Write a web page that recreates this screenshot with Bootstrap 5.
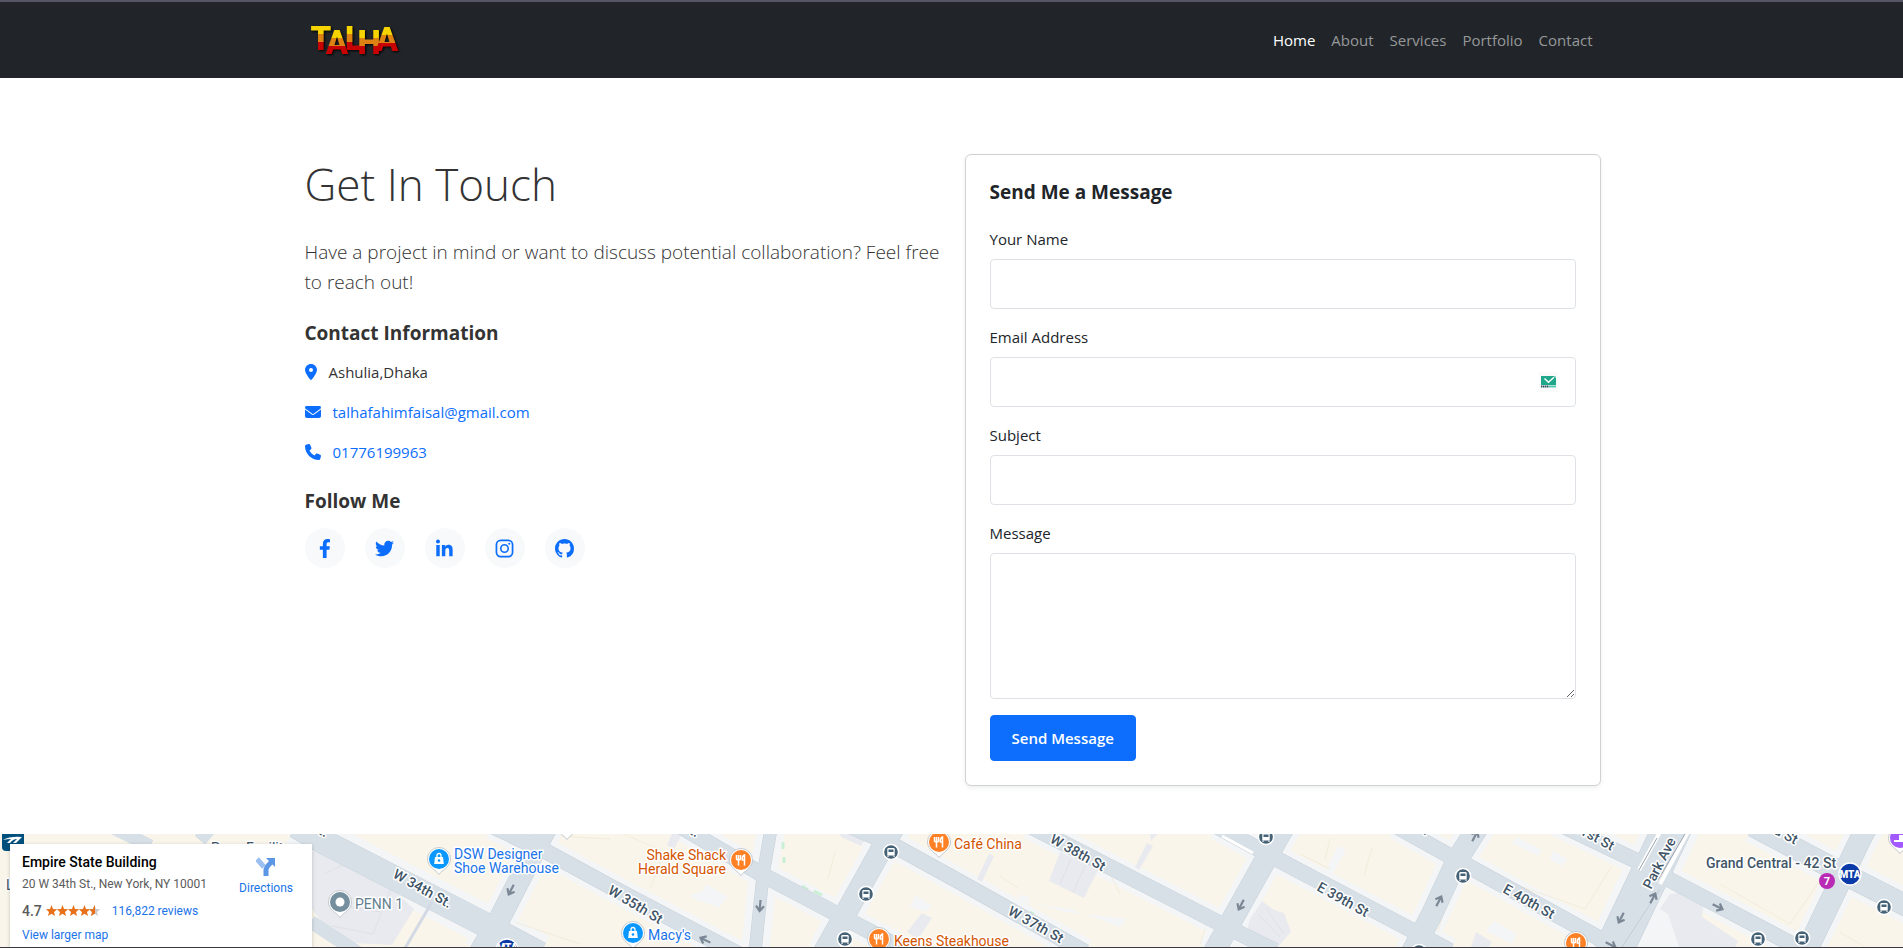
<!DOCTYPE html>
<html lang="en">
<head>
<meta charset="utf-8">
<meta name="viewport" content="width=device-width, initial-scale=1">
<title>Contact | Talha</title>
<link href="https://cdn.jsdelivr.net/npm/bootstrap@5.3.0/dist/css/bootstrap.min.css" rel="stylesheet">
<style>
  body { font-family: "Open Sans", "Noto Sans", sans-serif; font-size: 15px; line-height: 24px; }
  .container { padding-left: 13px; padding-right: 11px; }
  .site-nav { border-top: 2px solid #565666; padding: 0; min-height: 78px; }
  .site-nav .nav-link { padding: 8px; }
  .site-nav .navbar-nav .nav-link { color: #96989a; }
  .site-nav .navbar-nav .nav-link.active { color: #fff; }
  .brand-mark { filter: drop-shadow(1px 1px 1px #000); }
  .contact-area { padding-top: 76px; padding-bottom: 48px; }
  .intro { color: #333; }
  .intro h1 { font-size: 44px; font-weight: 300; line-height: 60px; margin-bottom: 23px; }
  .intro-lead { font-size: 19px; font-weight: 300; line-height: 30px; margin-bottom: 23px; }
  .block-title { font-size: 19px; font-weight: 700; line-height: 26px; margin-bottom: 14px; }
  .message-card .block-title { margin-bottom: 22px; }
  .contact-list a { text-decoration: none; }
  .contact-list svg { height: 16px; fill: #0d6efd; margin-right: 12px; flex: none; }
  .social { gap: 20px; }
  .social a { width: 40px; height: 40px; background: #f8f9fa; }
  .social svg { height: 19px; fill: #0d6efd; }
  .message-card { border-color: #d0d1d3; }
  .form-control { padding: 12px; border-radius: 4px; font-size: 15px; line-height: 24px; }
  .mail-hint { right: 18px; top: 15px; background: #fafafa; }
  .btn-send { font-size: 15px; font-weight: 600; line-height: 24px; padding: 10px 21px; border-radius: 4px; }
  .map { height: 114px; border-bottom: 1px solid #38383d; background: #f9f5ea; font-family: Roboto, sans-serif; }
  .map-art { width: 100%; height: 113px; }
  .map-info { left: 10px; top: 10px; width: 302px; height: 103px; padding: 8px 12px; font-size: 12px; line-height: 16px; color: #5b5b5b; box-shadow: 0 1px 4px rgba(0,0,0,.2); }
  .map-info a { color: #1a73e8; text-decoration: none; }
  .map-info strong { font-size: 14px; font-weight: 500; line-height: 20px; color: #000; }
  .map-info .score { font-size: 14px; font-weight: 500; }
  .map-info .place { margin: 4px 0 11px; }
  .directions { right: 19px; top: 12px; }
</style>
</head>
<body>
<nav class="navbar navbar-expand-lg bg-dark navbar-dark site-nav">
  <div class="container">
    <a class="navbar-brand p-0 m-0" href="#" aria-label="Talha">
      <svg class="d-block brand-mark" width="100" height="36" viewBox="0 0 100 36" font-family="Roboto, sans-serif" font-weight="900">
        <defs>
          <linearGradient id="flag" gradientUnits="userSpaceOnUse" x1="0" y1="-24" x2="0" y2="0">
            <stop offset=".34" stop-color="#f5d400"/><stop offset=".34" stop-color="#de8213"/>
            <stop offset=".66" stop-color="#de8213"/><stop offset=".66" stop-color="#c60202"/>
          </linearGradient>
        </defs>
        <g font-size="33" text-anchor="middle" fill="url(#flag)">
          <text transform="translate(16 28)">T</text><text transform="translate(32 32)">A</text><text transform="translate(49 28)">L</text><text transform="translate(64 32)">H</text><text transform="translate(82 29)">A</text>
        </g>
      </svg>
    </a>
    <button class="navbar-toggler" type="button" data-bs-toggle="collapse" data-bs-target="#menu" aria-label="Menu"><span class="navbar-toggler-icon"></span></button>
    <div class="collapse navbar-collapse" id="menu">
      <ul class="navbar-nav ms-auto">
        <li class="nav-item"><a class="nav-link active" href="#">Home</a></li>
        <li class="nav-item"><a class="nav-link" href="#">About</a></li>
        <li class="nav-item"><a class="nav-link" href="#">Services</a></li>
        <li class="nav-item"><a class="nav-link" href="#">Portfolio</a></li>
        <li class="nav-item"><a class="nav-link" href="#">Contact</a></li>
      </ul>
    </div>
  </div>
</nav>

<main>
  <section class="container contact-area">
    <div class="row">
      <div class="col-lg-6 intro">
        <h1>Get In Touch</h1>
        <p class="intro-lead">Have a project in mind or want to discuss potential collaboration? Feel free to reach out!</p>
        <h2 class="block-title">Contact Information</h2>
        <ul class="list-unstyled contact-list d-flex flex-column gap-3 mb-4">
          <li class="d-flex align-items-center"><svg viewBox="0 0 384 512"><path d="M215.7 499.2C267 435 384 279.4 384 192C384 86 298 0 192 0S0 86 0 192c0 87.4 117 243 168.3 307.2c12.3 15.3 35.1 15.3 47.4 0zM192 128a64 64 0 1 1 0 128 64 64 0 1 1 0-128z"/></svg>Ashulia,Dhaka</li>
          <li class="d-flex align-items-center"><svg viewBox="0 0 512 512"><path d="M48 64C21.5 64 0 85.5 0 112c0 15.1 7.1 29.3 19.2 38.4L236.8 313.6c11.4 8.5 27 8.5 38.4 0L492.8 150.4c12.1-9.1 19.2-23.3 19.2-38.4c0-26.5-21.5-48-48-48H48zM0 176V384c0 35.3 28.7 64 64 64H448c35.3 0 64-28.7 64-64V176L294.4 339.2c-22.8 17.1-54 17.1-76.8 0L0 176z"/></svg><a href="mailto:talhafahimfaisal@gmail.com">talhafahimfaisal@gmail.com</a></li>
          <li class="d-flex align-items-center"><svg viewBox="0 0 512 512"><path d="M164.9 24.6c-7.7-18.6-28-28.5-47.4-23.2l-88 24C12.1 30.2 0 46 0 64C0 311.4 200.6 512 448 512c18 0 33.8-12.1 38.6-29.5l24-88c5.3-19.4-4.6-39.7-23.2-47.4l-96-40c-16.3-6.8-35.2-2.1-46.3 11.6L304.7 368C234.3 334.7 177.3 277.7 144 207.3L193.3 167c13.7-11.2 18.4-30 11.6-46.3l-40-96z"/></svg><a href="tel:01776199963">01776199963</a></li>
        </ul>
        <h2 class="block-title">Follow Me</h2>
        <div class="social d-flex">
          <a class="rounded-circle d-flex align-items-center justify-content-center" href="#" aria-label="Facebook"><svg viewBox="0 0 320 512"><path d="M279.14 288l14.22-92.66h-88.91v-60.13c0-25.35 12.42-50.06 52.24-50.06h40.42V6.26S260.43 0 225.36 0c-73.22 0-121.08 44.38-121.08 124.72v70.62H22.89V288h81.39v224h100.17V288z"/></svg></a>
          <a class="rounded-circle d-flex align-items-center justify-content-center" href="#" aria-label="Twitter"><svg viewBox="0 0 512 512"><path d="M459.37 151.716c.325 4.548.325 9.097.325 13.645 0 138.72-105.583 298.558-298.558 298.558-59.452 0-114.68-17.219-161.137-47.106 8.447.974 16.568 1.299 25.34 1.299 49.055 0 94.213-16.568 130.274-44.832-46.132-.975-84.792-31.188-98.112-72.772 6.498.974 12.995 1.624 19.818 1.624 9.421 0 18.843-1.3 27.614-3.573-48.081-9.747-84.143-51.98-84.143-102.985v-1.299c13.969 7.797 30.214 12.67 47.431 13.319-28.264-18.843-46.781-51.005-46.781-87.391 0-19.492 5.197-37.36 14.294-52.954 51.655 63.675 129.3 105.258 216.365 109.807-1.624-7.797-2.599-15.918-2.599-24.04 0-57.828 46.782-104.934 104.934-104.934 30.213 0 57.502 12.67 76.67 33.137 23.715-4.548 46.456-13.32 66.599-25.34-7.798 24.366-24.366 44.833-46.132 57.827 21.117-2.273 41.584-8.122 60.426-16.243-14.292 20.791-32.161 39.308-52.628 54.253z"/></svg></a>
          <a class="rounded-circle d-flex align-items-center justify-content-center" href="#" aria-label="LinkedIn"><svg viewBox="0 -16 448 512"><path d="M100.28 448H7.4V148.9h92.88zM53.79 108.1C24.09 108.1 0 83.5 0 53.8a53.79 53.79 0 0 1 107.58 0c0 29.7-24.1 54.3-53.79 54.3zM447.9 448h-92.68V302.4c0-34.7-.7-79.2-48.29-79.2-48.29 0-55.69 37.7-55.69 76.7V448h-92.78V148.9h89.08v40.8h1.3c12.4-23.5 42.69-48.3 87.88-48.3 94 0 111.28 61.9 111.28 142.3V448z"/></svg></a>
          <a class="rounded-circle d-flex align-items-center justify-content-center" href="#" aria-label="Instagram"><svg viewBox="0 0 20 20"><rect x="1.500" y="1.500" width="17" height="17" rx="4.500" fill="none" stroke="#0d6efd" stroke-width="1.800"/><circle cx="10" cy="10" r="3.900" fill="none" stroke="#0d6efd" stroke-width="1.700"/><circle cx="15" cy="5" r="1.100"/></svg></a>
          <a class="rounded-circle d-flex align-items-center justify-content-center" href="#" aria-label="GitHub"><svg viewBox="0 0 16 16"><path d="M8 0C3.58 0 0 3.58 0 8c0 3.54 2.29 6.53 5.47 7.59.4.07.55-.17.55-.38 0-.19-.01-.82-.01-1.49-2.01.37-2.53-.49-2.69-.94-.09-.23-.48-.94-.82-1.13-.28-.15-.68-.52-.01-.53.63-.01 1.08.58 1.23.82.72 1.21 1.87.87 2.33.66.07-.52.28-.87.51-1.07-1.78-.2-3.64-.89-3.64-3.95 0-.87.31-1.59.82-2.15-.08-.2-.36-1.02.08-2.12 0 0 .67-.21 2.2.82.64-.18 1.32-.27 2-.27.68 0 1.36.09 2 .27 1.53-1.04 2.2-.82 2.2-.82.44 1.1.16 1.92.08 2.12.51.56.82 1.27.82 2.15 0 3.07-1.87 3.75-3.65 3.95.29.25.54.73.54 1.48 0 1.07-.01 1.93-.01 2.2 0 .21.15.46.55.38A8.012 8.012 0 0 0 16 8c0-4.42-3.58-8-8-8z"/></svg></a>
        </div>
      </div>
      <div class="col-lg-6">
        <div class="card shadow-sm message-card">
          <form class="card-body p-4">
            <h2 class="block-title">Send Me a Message</h2>
            <div class="mb-3"><label class="d-block mb-2" for="name">Your Name</label><input class="form-control" id="name" type="text"></div>
            <div class="mb-3"><label class="d-block mb-2" for="email">Email Address</label>
              <div class="position-relative"><input class="form-control" id="email" type="email">
                <svg class="mail-hint position-absolute" width="19" height="20" viewBox="0 0 19 20"><path d="M2 4h13l2 2v9H2z" fill="#1fa78c"/><path d="M15 4h2v2z" fill="#9adccc"/><path d="M5.500 6.500l4 3.800 5.500-5" fill="none" stroke="#fff" stroke-width="1.400"/><path d="M2 13h15v3H2z" fill="#fafafa"/><path d="M2 14.500h8" stroke="#2d4a5c" stroke-width="2" stroke-dasharray="1.500 .5"/><path d="M10 14.500h7" stroke="#57c9b0" stroke-width="2"/></svg>
              </div>
            </div>
            <div class="mb-3"><label class="d-block mb-2" for="subject">Subject</label><input class="form-control" id="subject" type="text"></div>
            <div class="mb-3"><label class="d-block mb-2" for="message">Message</label><textarea class="form-control" id="message" rows="5"></textarea></div>
            <button class="btn btn-primary btn-send" type="submit">Send Message</button>
          </form>
        </div>
      </div>
    </div>
  </section>

  <section class="map position-relative overflow-hidden" aria-label="Map">
    <svg class="map-art d-block" viewBox="0 0 1903 113" preserveAspectRatio="xMidYMid slice">
      <defs>
        <g id="roads" fill="none">
          <path d="M296-8 320 6 480 88 540 120"/>
          <path d="M110-8 150 12M200 6 212-8M311 88 360 120" stroke-width="13"/>
        </g>
        <g id="narrow" fill="none">
          <path d="M492-8 547 18 613 54 742 122M680-8 763 41 833 78 905 116M850-8 893 11 960 48 1085 118M1030-8 1223 91 1275 117M1216-8 1273 23 1417 99 1450 117M1396-8 1457 26 1597 103 1625 118M1555-12 1643 30 1670 46 1805 117"/>
        </g>
        <path id="broad" fill="none" d="M771-5 763 41 755 118"/>
        <path id="aves" fill="none" d="M549-10 543 0 500 84 480 118M896-10 890 0 824 118M1286-10 1280 0 1214 118M1480-10 1457 26 1432 80 1411 120M1869-10 1863 0 1806 118M1753-8 1840 38 1903 70 1920 78"/>
        <path id="park" fill="none" d="M1674-10 1612 120"/>
        <g id="drop"><path d="M0 15.500C-3 11-11.500 8-11.500 0a11.500 11.500 0 0 1 23 0C11.500 8 3 11 0 15.500z" fill="#fff" stroke="#b9bec4" stroke-width=".8"/></g>
        <g id="food"><use href="#drop"/><circle r="10" fill="#ff8126"/><path d="M-4.500-5v3.500q0 1.500 2 1.500t2-1.500V-5M-2.500-5V5.500M3.500 5.500V-5Q1-4 1.300 0H3.500" fill="none" stroke="#fff" stroke-width="1.500"/></g>
        <g id="shop"><use href="#drop"/><circle r="10" fill="#0a97ff"/><path d="M-4-2h8l.8 7h-9.600z" fill="#fff"/><path d="M-2-2v-1.500a2 2 0 0 1 4 0V-2" fill="none" stroke="#fff" stroke-width="1.300"/><circle cy="1.500" r="1.300" fill="#0a97ff"/></g>
        <g id="bus"><circle r="7.600" fill="#456276" stroke="#fff" stroke-width="1.500"/><rect x="-3.700" y="-4" width="7.400" height="7.500" rx="1.200" fill="#fff"/><path d="M-2.500-2.500h5v2.500h-5z" fill="#456276"/><path d="M-3 3.500v1.300M3 3.500v1.300" stroke="#fff" stroke-width="1.500"/></g>
        <path id="way" d="M-6 0H4M0-4 5 0 0 4" fill="none" stroke="#7b8794" stroke-width="2.200"/>
      </defs>
      <path d="M0 0h1903v113H0z" fill="#f9f5ea"/>
      <!-- pavement edging beside each road -->
      <g stroke="#f4f5f6" stroke-linejoin="round">
        <use href="#roads" stroke-width="40"/><use href="#narrow" stroke-width="27"/><use href="#broad" stroke-width="28"/><use href="#aves" stroke-width="34"/><use href="#park" stroke-width="54"/>
      </g>
      <!-- grey and pale buildings -->
      <g fill="#e8eaef">
        <path d="M312 18 345 12 414 75 392 111 336 108 312 75z"/><path d="M1060 18 1098 36 1084 64 1049 47z"/><path d="M1147 9 1153 12 1139 36 1135 33z"/><path d="M1150-2h9l-8 9z"/><path d="M1262 67 1274 76 1284 79 1291 98 1278 113 1247 96 1250 85z"/><path d="M989 20 994 22 982 48 977 45z"/><path d="M840 0h28l-7 12-20-9z"/><path d="M672 0h10l-8 15-7-4z"/><path d="M922 79 932 84 918 105 907 98z"/><path d="M1670 60 1688 58 1704 66 1702 83 1738 107 1734 116H1674l-6-20-13-14z"/>
      </g>
      <path d="M1476 98 1492 108 1487 116H1470z" fill="#e8eaef"/>
      <g fill="#f4f5f6">
        <path d="M690 61 702 58 706 50 728 63 718 74 713 71 696 66z"/><path d="M915 61 932 72 926 78 910 73z"/><path d="M1018 61 1028 62 1030 69 1066 78 1127 85 1120 93 1070 75 1020 68z"/><path d="M1338 12 1346 16 1332 41 1325 38z"/><path d="M1517 3 1542 16 1538 22 1512 9z"/><path d="M1553 17 1567 25 1562 32 1550 26z"/><path d="M1494 87 1517 100 1512 110 1486 97z"/><path d="M1652 70 1668 80 1680 116H1630z"/>
      </g>
      <g stroke="#dfe1e8" stroke-width="1" fill="none">
        <path d="M324 40 350 28 392 52 373 100 332 92M330 70 380 78M1266 74 1284 100M1258 80 1280 103M1071 25 1060 50M1085 32 1073 58"/>
      </g>
      <g stroke="#f3ecdb" stroke-width="1" fill="none">
        <path d="M650 54 665 18 620-2M560 2 610 5M515 88 580 110M835 18 828 45M1018 54 1000 42M1110 40 1120 60M1200 110 1205 95M1300 20 1330 35M1330 5 1325 25M1372 14 1364 42M1500 45 1585 75 1612 32M1720 50 1790 90 1820 46M1450 50 1438 98M1840 98 1865 113"/>
      </g>
      <path d="M783 8v7M784 23v6M802 52l6 4M814 57l8 4M866 88l8 4M1030 78l4 2" stroke="#c9efd5" stroke-width="3" fill="none"/>
      <g stroke="#c6d0da" stroke-linejoin="round">
        <use href="#roads" stroke-width="25"/><use href="#narrow" stroke-width="16"/><use href="#broad" stroke-width="13"/><use href="#aves" stroke-width="22"/><use href="#park" stroke-width="39"/>
      </g>
      <g stroke="#d7e0e7" stroke-linejoin="round">
        <use href="#roads" stroke-width="24"/><use href="#narrow" stroke-width="15"/><use href="#broad" stroke-width="12"/><use href="#aves" stroke-width="21"/><use href="#park" stroke-width="38"/>
      </g>
      <path d="M432 68 404 116" stroke="#d3dae5" stroke-width="3"/>
      <path d="M1222 2 1253 19" stroke="#fff" stroke-width="3"/>
      <g fill="none"><path d="M1660-2 1639 36M1688-2 1660 50" stroke="#fff" stroke-width="4"/><path d="M1657 4 1639 36M1685 0 1658 46" stroke="#9aa3ac"/><path d="M1660 55 1622 113" stroke="#c3ccd6"/></g>

      <use href="#way" transform="translate(511 56) rotate(117)"/><use href="#way" transform="translate(760 72) rotate(95)"/><use href="#way" transform="translate(705 106) rotate(206)"/><use href="#way" transform="translate(1241 71) rotate(117)"/><use href="#way" transform="translate(1439 67) rotate(-63)"/><use href="#way" transform="translate(1475 2) rotate(-63)"/><use href="#way" transform="translate(1653 64) rotate(-63)"/><use href="#way" transform="translate(1621 84) rotate(117)"/><use href="#way" transform="translate(1718 73) rotate(27)"/><use href="#way" transform="translate(1611 111) rotate(27)"/>

      <!-- labels -->
      <g font-family="Roboto, sans-serif" font-size="14" font-weight="500" fill="#3f5567" stroke="#fff" stroke-width="3" stroke-linejoin="round" paint-order="stroke">
        <text transform="translate(392 43) rotate(29)">W 34th St.</text>
        <text transform="translate(607 59) rotate(31)">W 35th St</text>
        <text transform="translate(1049 8) rotate(29)">W 38th St</text>
        <text transform="translate(1007 80) rotate(29)">W 37th St</text>
        <text transform="translate(1316 56) rotate(29)">E 39th St</text>
        <text transform="translate(1502 58) rotate(29)">E 40th St</text>
        <text transform="translate(1572 -4) rotate(28)">41st St</text>
        <text transform="translate(1752 -12) rotate(28)">42nd St</text>
        <text transform="translate(1386 -20) rotate(28)">40th St</text>
        <text transform="translate(296 -12) rotate(28)">th St.</text>
        <text transform="translate(667 -12) rotate(28)">th St.</text>
        <text transform="translate(1651 56) rotate(-63)">Park Ave</text>
        <text x="1706" y="34">Grand Central - 42 St</text>
        <g font-weight="400"><text x="355" y="75" fill="#64808f">PENN 1</text><text x="211" y="19">Penn Facility</text><text x="6" y="56">L</text></g>
        <g font-weight="400" fill="#1a73e8"><text x="454" y="25">DSW Designer</text><text x="454" y="39">Shoe Warehouse</text><text x="648" y="106">Macy's</text></g>
        <g font-weight="400" fill="#d35400"><text x="726" y="26" text-anchor="end">Shake Shack</text><text x="726" y="40" text-anchor="end">Herald Square</text><text x="954" y="15">Café China</text><text x="894" y="112">Keens Steakhouse</text></g>
      </g>
      <use href="#shop" x="439" y="25"/><use href="#shop" x="633" y="99"/><use href="#drop" x="567" y="-10"/>
      <use href="#food" x="741" y="26"/><use href="#food" x="939" y="8"/><use href="#food" x="879" y="105"/><use href="#food" x="1576" y="109"/>
      <use href="#bus" x="891" y="18"/><use href="#bus" x="866" y="60"/><use href="#bus" x="845" y="105"/><use href="#bus" x="1266" y="3"/><use href="#bus" x="1419" y="118"/><use href="#bus" x="1463" y="42"/><use href="#bus" x="1884" y="73"/><use href="#bus" x="1758" y="105"/><use href="#bus" x="1802" y="104"/>
      <g transform="translate(340 68)"><use href="#drop"/><circle r="10" fill="#758f9f"/><circle r="4.500" fill="#fff"/></g>
      <g transform="translate(1900 4)"><use href="#drop"/><circle r="10" fill="#a259ff"/><path d="M-6 4h12v-2h-2v-5h-5v5h-5z" fill="#fff"/></g>
      <circle cx="1827" cy="47" r="8" fill="#b92bb5"/><text x="1827" y="51" text-anchor="middle" font-size="11" font-weight="700" fill="#fff">7</text>
      <g transform="translate(1850 40)"><circle r="11" fill="#0a3aa8" stroke="#fff" stroke-width="1.500"/><text y="4" text-anchor="middle" font-size="10" font-weight="900" fill="#fff">MTA</text></g>
      <g transform="translate(507 116)"><circle r="11" fill="#0a3aa8" stroke="#fff" stroke-width="1.500"/><text y="1" text-anchor="middle" font-size="10" font-weight="900" fill="#fff">MTA</text></g>
      <path d="M2 0h22v17H6q-4 0-4-4z" fill="#00507d"/><path d="M3 6Q10 2 22 3L16 9H13L17 5Q13 5 10 9H7L11 5Q7 5 3 6z" fill="#fff"/>
    </svg>
    <div class="map-info position-absolute bg-white">
      <strong class="d-block">Empire State Building</strong>
      <div class="place">20 W 34th St., New York, NY 10001</div>
      <div class="d-flex align-items-center mb-2">
        <span class="score">4.7</span>
        <svg class="ms-1" width="54" height="12" viewBox="0 0 54 12" role="img" aria-label="4.7 stars">
          <defs><path id="star" d="M5.500 0 7 4l4.200.2L8 6.900 9 11 5.500 8.700 2 11 3 6.900-.2 4.200 4 4z"/><clipPath id="half"><path d="M0-1h6v14H0z"/></clipPath></defs>
          <g fill="#e7711b"><use href="#star"/><use href="#star" x="11"/><use href="#star" x="22"/><use href="#star" x="33"/></g><use href="#star" x="43" fill="#c9c9c9"/><g transform="translate(43)"><use href="#star" clip-path="url(#half)" fill="#e7711b"/></g>
        </svg>
        <a class="ms-2 ps-1" href="#">116,822 reviews</a>
      </div>
      <a class="d-block" href="#">View larger map</a>
      <a class="directions position-absolute text-center" href="#">
        <svg class="d-block mx-auto mb-1" width="20" height="20" viewBox="0 0 20 20"><path d="M1 3 8 11" stroke="#9bbff0" stroke-width="5"/><path d="M10 20v-6q0-3 6-8.500" fill="none" stroke="#5c97e6" stroke-width="5"/><path d="M10 2h9v9z" fill="#5c97e6"/></svg>Directions</a>
    </div>
  </section>
</main>
<script src="https://cdn.jsdelivr.net/npm/bootstrap@5.3.0/dist/js/bootstrap.bundle.min.js"></script>
</body>
</html>
